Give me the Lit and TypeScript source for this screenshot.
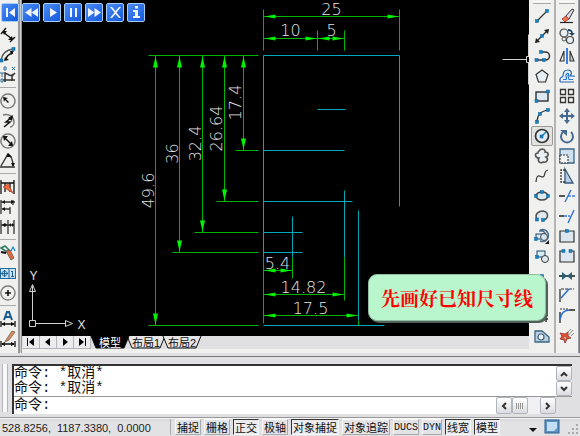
import { LitElement, html, svg, css } from "lit";
import { customElement, state } from "lit/decorators.js";
import { classMap } from "lit/directives/class-map.js";

const NAVY = "#1c4668";
const BLUE = "#1484c8";
const K = "#333";

const dots = (...pts: number[][]) =>
  pts.map(([x, y]) => svg`<rect x=${x - 1.5} y=${y - 1.5} width="3" height="3" fill=${BLUE} stroke="#0a5c94" stroke-width=".5"/>`);

const line = (d: string, color = K, w = 1.2) =>
  svg`<path d=${d} fill="none" stroke=${color} stroke-width=${w}/>`;

const shape = (d: string, fill = "#e4edf4", color = K, w = 1.2) =>
  svg`<path d=${d} fill=${fill} stroke=${color} stroke-width=${w}/>`;

const icons: Record<string, unknown> = {
  // dimension toolbar
  linear: [line("M1 7L6 1M10 15L15 10M3 5L12 12", "#111", 1.4), shape("M3 4h4L4 8zM13 13H8L12 9z", "#111", "none")],
  arcLen: [line("M1 13C2 7 6 3 13 2", "#555", 1.5), line("M6 13C6 9 9 7 13 6", "#111", 1.5), shape("M4 14l1-4 4 3zM14 4l-3 4-1-4z", "#111", "none"), dots([1.5, 13.5], [13.5, 2])],
  ordinate: [line("M5 5V15M3 13H15M5 7C9 6 9 10 12 8V14M15 6L12 9", K, 1.5), line("M0 6h4M2 6v4M1 12h2v3H1zM4 0h2v3H4zM12 0l3 3M15 0l-3 3", "#2c70a0", 1)],
  radius: [line("M8 1A7 7 0 1 1 7.9 1", "#777", 1.4), shape("M3 4l5 1-2 1 3 3-1 1-3-3-1 2z", "#111", "none")],
  jogged: [line("M3 2C9 0 14 4 14 9C14 12 12 14 10 14", "#777", 1.4), line("M12 4L6 9H10L4 14", "#111", 1.5), shape("M13 2l-1 6-4-3z", "#111", "none")],
  diameter: [line("M8 1A7 7 0 1 1 7.9 1", "#777", 1.4), line("M4 4L12 12", "#111", 1.5), shape("M3 3h5L4 8zM13 13H8L12 8z", "#111", "none")],
  angular: [line("M0 14H15M1 13L8 1C11 3 13 8 13 13", K, 1.4), shape("M6 4l2-4 4 4zM11 10h4l-2 4z", "#111", "none")],
  quick: [line("M1 1V15M14 1V15M1 4H14M5 4V13M10 4V13", "#111", 1.3), shape("M3 8l5-3 5 9-5-3z", "#ee6a3c", "#b44020", .7)],
  baseline: [line("M1 1V15M1 3H15M13 1v5M2 10H10M10 8V15", K, 1.3), shape("M2 3l3-2v4zM14 3l-3-2v4zM2 10l3-2v4z", "#111", "none")],
  cont: [line("M1 1V15M8 1V15M14 1V15M1 6H14", K, 1.3), shape("M2 6l3-2v4zM7 6l-2-2v4zM9 6l2-2v4zM14 6l-2-2v4z", "#111", "none")],
  leader: [line("M1 3l4-2 4 4-2 2z", "#2c7a5c", 1.6), line("M1 7l5 1", "#111", 2), shape("M6 6l4-1 4 8-3 2z", "#e66a38", "#555", .8), line("M11 6l2-4 2 4", BLUE, 1.2)],
  tolerance: [svg`<rect x=".5" y="3.5" width="15" height="10" fill="#c8e2f4" stroke="#276c9c"/>`, line("M9 3V14M4.500 5v7M1 8.500h7M4.500 6a2.500 2.500 0 1 0 .1 0M12.500 6v5M11 6.500h2M11 11.500h3", "#1b6296", 1)],
  center: [line("M8 1A7 7 0 1 1 7.900 1", "#777", 1.3), line("M5 8H11M8 5V11", "#111", 1.6)],
  dimText: [line("M4 9L7 1H9L12 9M5 6H11", "#175c90", 2), line("M1 10V16M15 10V16M2 13H14", "#111", 1.3), shape("M1 13l4-2v4zM15 13l-4-2v4z", "#111", "none")],
  dimEdit: [shape("M6 9L12 0l3 1L9 9l-4 2z", "#e58a68", "#664", .8), line("M1 10V16M15 10V16M2 13H14", "#111", 1.3), shape("M1 13l4-2v4zM15 13l-4-2v4z", "#111", "none")],
  // draw toolbar
  line: [line("M2 14L13 3", K), dots([3, 13], [13, 3])],
  xline: [line("M2 14L14 2", K, 1.5), shape("M1 15l1-5 4 4zM15 1l-5 1 4 4z", "#222", "none"), dots([8, 8])],
  pline: [line("M2 12H12A4 4 0 0 0 11 4H8", K, 1.5), dots([2.5, 12], [10, 12], [7, 4])],
  polygon: shape("M8 2L14 6.500 11.500 14H4.500L2 6.500Z"),
  rect: [svg`<rect x="2" y="4" width="12" height="9" fill="#dce9f2" stroke="#222" stroke-width="1.300"/>`, dots([2.5, 13], [14, 3.5])],
  arc: [line("M3 14C3 7 7 3 14 2", K), dots([3, 14], [6, 6], [14, 2])],
  circle: [svg`<circle cx="8" cy="8" r="6.500" fill="#e4edf4" stroke="#333" stroke-width="1.700"/>`, line("M8 8L12 4", BLUE, 1.5), dots([7.5, 8.5])],
  cloud: shape("M5 3C7 0 12 1 11 4C15 4 15 8 12 9C15 11 13 15 9 14C6 16 3 13 5 10C1 10 0 5 4 5C4 4 4 3 5 3Z", "#eaf0f6", "#555", 1.6),
  spline: line("M2 14C3 2 8 12 10 8S10 3 14 2"),
  ellipse: [svg`<ellipse cx="8" cy="8" rx="6" ry="4" fill="#dfe9f0" stroke="#444" stroke-width="1.400"/>`, dots([2, 8], [14, 8], [8, 4])],
  ellArc: [shape("M3 11C0 6 5 3 9 3C15 4 15 11 9 12", "#dfe9f0", "#555", 1.6), dots([3, 11.5], [9, 12])],
  insert: [svg`<rect x="2" y="6" width="8" height="5" fill="#d8ecf4" stroke=${NAVY}/>`, line("M6 2A6 6 0 1 1 6 13M5 3h4l3 3", "#4a7090", 1.5), svg`<circle cx="10" cy="9" r="3.500" fill="#d5e4ee" stroke="#445"/>`, shape("M15 12v4h-4z", "#111", "none"), dots([2, 11])],
  block: [svg`<rect x="3" y="3" width="8" height="6" fill="#d8ecf4" stroke=${NAVY}/><circle cx="11" cy="11" r="3.500" fill="#dfe9f0" stroke="#333"/>`, dots([3, 9])],
  point: dots([8, 8]),
  hatch: line("M2 3H14M2 7H14M2 11H14M4 2V14M8 2V14M12 2V14", NAVY, 1),
  gradient: line("M2 3H14M2 7H14M2 11H14M4 2V14M8 2V14M12 2V14", "#222", 1.3),
  region: [shape("M1 3H8L15 9V14H1Z", "#b9cede", "#3d6482", 1.3), svg`<circle cx="7" cy="9" r="3" fill="#eef5fa" stroke="#3d6482" stroke-width="1.200"/>`],
  // modify toolbar
  erase: [shape("M6 9L13 1l2 1-5 9z", "#dde", "#333", 1), shape("M3 11l4-3 3 3-4 3z", "#ee7450", "#933", .8), line("M1 14.500H14", "#222", 1.2)],
  copy: [svg`<circle cx="5" cy="5" r="4" fill="#e6edf3" stroke="#444" stroke-width="1.200"/><circle cx="11" cy="12" r="3.500" fill="#e6edf3" stroke="#444" stroke-width="1.200"/><circle cx="5" cy="11" r="2" fill="none" stroke="#555"/>`, line("M9 2c4 0 4 2 4 4", NAVY, 1.8), shape("M10 5h6l-3 3z", NAVY, "none")],
  mirror: [shape("M5 3V13H1Z", "#f0f0f0", K, 1.1), shape("M11 3V13H15Z", "#c8d0d8", K, 1.1), line("M8 0V16", "#3c7ce0", 2)],
  offset: [shape("M1 14V11C1 9 4 9 4 8C4 4 6 2 9 2C12 2 14 5 11 8H15V9M1 14H15", "#e8f0f8", "#2562a8", 1.2), line("M4 11.500H7C9 10 6 9 7 7C8 4 11 6 9 8L10 11.500H14", "#2c78d0", 1.2)],
  array: svg`<path d="M1.500 1.500h5v5h-5zM9.500 1.500h5v5h-5zM1.500 9.500h5v5h-5zM9.500 9.500h5v5h-5z" fill="#f6f6f6" stroke="#333" stroke-width="1.300"/>`,
  move: [line("M8 2V14M2 8H14", "#456a92", 2), shape("M8 0l3 4H5zM8 16l3-4H5zM0 8l4-3v6zM16 8l-4-3v6z", "#456a92", "none")],
  rotate: [line("M4 4A6 6 0 1 0 12 4", "#456a92", 2), shape("M1 2h7v6z", "#456a92", "none")],
  scale: [svg`<path d="M1 1H15V15H1z" fill="#cfe1ef" stroke="#3c6688" stroke-width="1.300"/><path d="M1 7H9V15H1z" fill="#f2f2f2" stroke="#333" stroke-dasharray="2 1"/>`],
  stretch: [shape("M6 1L14 15H6Z", "#b8cfe2", "#34597e", 1.3), svg`<path d="M6 2H2V14H7" fill="none" stroke="#333" stroke-width="1.300" stroke-dasharray="2 1"/>`],
  trim: [line("M0 8H6", "#222", 1.5), line("M6 14L12 2", "#2468d0", 1.3), svg`<path d="M9 8H16" stroke="#3c7ce0" stroke-width="1.300" stroke-dasharray="3 1"/>`],
  extend: [line("M0 8H5", "#222", 1.5), svg`<path d="M5 8H11" stroke="#3c7ce0" stroke-width="1.300" stroke-dasharray="3 1"/>`, line("M9 15L15 2", "#2468d0", 1.3)],
  breakPt: [shape("M1 3H15V14H1Z", "#dde7ef", "#333", 1.2), dots([8, 3])],
  breakIt: [shape("M4 3H1V14H15V3H12", "#dde7ef", "#333", 1.2), dots([4.5, 3], [11.5, 3])],
  join: [line("M0 8H16", "#222", 1.6), shape("M3 4l5 4-5 4zM13 4l-5 4 5 4z", "#2b6070", "none")],
  chamfer: [line("M1 1V14", "#222", 1.2), line("M2 10L10 1", "#2c70d0", 1.6), svg`<path d="M2 1H15" stroke="#333" stroke-dasharray="3 1"/>`],
  fillet: [line("M1 4V15M10 2H16", "#222", 1.3), line("M1 11C2 5 5 2 11 2", "#2c70d0", 1.7), svg`<path d="M1 1H9" stroke="#333" stroke-dasharray="2 1"/>`],
  explode: [shape("M1 5l5 1 3-2v4l3 2-4 1-2 4-1-3-4-1 2-3z", "#e2522c", "#933", .8), line("M9 8l5-6M12 8l3-3M9 4l3-3", "#888", 1), shape("M4 9l3 0 0 3z", "#eee", "#555", .5)],
};

@customElement("cad-icon")
class CadIcon extends LitElement {
  static properties = { name: {} };
  declare name: string;
  static styles = css`
    :host { display: block; width: 16px; height: 16px; }
    svg { display: block; overflow: visible; }
  `;
  render() {
    return html`<svg width="16" height="16" viewBox="0 0 16 16" aria-hidden="true">${icons[this.name]}</svg>`;
  }
}

@customElement("cad-toolbar")
class CadToolbar extends LitElement {
  static properties = { groups: { attribute: false }, active: {}, grip: { type: Boolean } };
  declare groups: string[][];
  declare active: string;
  declare grip: boolean;
  static styles = css`
    :host { display: flex; flex-direction: column; background: #f0f0ee; }
    .grip { height: 1px; margin: 1px 2px 2px; border-top: 1px solid #fff; border-bottom: 1px solid #aaa; flex: none; }
    .tool {
      flex: 0 1 20px; min-height: 0; display: flex; align-items: center; justify-content: center;
      padding: 0; border: 1px solid transparent; background: none; border-radius: 2px;
    }
    .on { border-color: #9a9a98; background: #e2e2e0; }
    .sep { flex: none; height: 1px; margin: 2px 0 3px; background: #aaa; }
  `;
  render() {
    return html`
      ${this.grip ? html`<div class="grip"></div>` : ""}
      ${this.groups.map((g, i) => html`
        ${i ? html`<div class="sep"></div>` : ""}
        ${g.map((n) => html`<button class=${classMap({ tool: true, on: n === this.active })} aria-label=${n}>
          <cad-icon .name=${n}></cad-icon></button>`)}
      `)}`;
  }
}

// A dimension line with an arrowhead at each end.
const dimH = (x1: number, x2: number, y: number) => svg`
  <path class="g" d="M${x1} ${y}H${x2}"/>
  <path class="head" d="M${x1 + 1} ${y}l11 -2v4zM${x2 - 1} ${y}l-11 -2v4z"/>`;
const dimV = (x: number, y1: number, y2: number) => svg`
  <path class="g" d="M${x} ${y1}V${y2}"/>
  <path class="head" d="M${x} ${y1 + 1}l-2.500 11h5zM${x} ${y2 - 1}l-2.500 -11h5z"/>`;
const label = (x: number, y: number, t: string) => svg`<text x=${x} y=${y}>${t}</text>`;
const labelV = (x: number, y: number, t: string) =>
  svg`<text transform="translate(${x} ${y}) rotate(-90)">${t}</text>`;

@customElement("cad-drawing")
class CadDrawing extends LitElement {
  static styles = css`
    :host { display: block; background: #000; overflow: hidden; }
    svg { display: block; width: 100%; height: 100%; }
    .g { stroke: #00b400; fill: none; }
    .c { stroke: #00a8b8; fill: none; }
    .w { stroke: #d0d0d0; fill: none; }
    .head { fill: #00f400; }
    text { font: 200 16px "DejaVu Sans", "DejaVu Sans Light", sans-serif; fill: #e4e4e4; text-anchor: middle; }
    .axis { font: 12px "Liberation Sans", sans-serif; }
  `;
  render() {
    return html`<svg viewBox="22 0 507 335" preserveAspectRatio="xMinYMin meet" role="img" aria-label="Drawing">
      <g transform="translate(.5 .5)">
        <path class="c" d="M263 257V55H399V206"/>
        <path class="c" d="M317 109H345M263 150H344M263 201H352M263 232H302M263 252H302"/>
        <path class="c" d="M292 216V257M344 190V257M358 210V320M263 325H384"/>
        <path class="g" d="M263 9V50M399 9V50M317 30V50M344 30V50M148 55H258M235 150H258M216 201H258M194 232H258M172 252H258M148 325H258M263 257V323M292 257V278M344 257V300M358 320V325"/>
        ${dimH(263, 399, 16)}${dimH(263, 317, 38)}${dimH(317, 344, 38)}
        ${dimH(263, 292, 270)}${dimH(263, 344, 294)}${dimH(263, 358, 315)}
        ${dimV(155, 55, 325)}${dimV(179, 55, 252)}${dimV(202, 55, 232)}${dimV(224, 55, 201)}${dimV(243, 55, 150)}
        ${label(331, 14, "25")}${label(290, 35, "10")}${label(331, 35, "5")}
        ${label(277, 268, "5.4")}${label(303, 292, "14.82")}${label(310, 313, "17.5")}
        ${labelV(153, 190, "49.6")}${labelV(177, 153, "36")}${labelV(200, 143, "32.4")}
        ${labelV(221, 128, "26.64")}${labelV(240, 102, "17.4")}
        <path class="w" d="M29 320H35V326H29ZM32 320V285M35 323H65M29 291L32 284L35 291ZM65 320L72 323L65 326ZM502 59H526M526 56H531V62H526ZM528 34V56M528 62V84"/>
        <text class="axis" x="33" y="279">Y</text>
        <text class="axis" x="81" y="328">X</text>
      </g>
    </svg>`;
  }
}

const media: [string, string][] = [
  ["First", "M4 4h2v9H4zM13 4v9L7 8.500z"],
  ["Rewind", "M8.500 4v9L2 8.500zM15 4v9L8.500 8.500z"],
  ["Play", "M6 4l7 4.500L6 13z"],
  ["Pause", "M5 4h2v9H5zM10 4h2v9h-2z"],
  ["Forward", "M2 4l6.500 4.500L2 13zM8.500 4L15 8.500 8.500 13z"],
  ["Close", "M3 3h2l3.500 4L12 3h2L9.500 8.500 14 14h-2L8.500 10 5 14H3l4.500-5.500z"],
  ["Info", "M7 2h3v2.500H7zM5 6h5v6h2v2H5v-2h2V8H5z"],
];
const nav = [
  ["First tab", "M2 2h1v8H2zM9 2v8L4 6z"],
  ["Previous tab", "M8 2v8L3 6z"],
  ["Next tab", "M4 2v8l5-4z"],
  ["Last tab", "M3 2v8l5-4zM9 2h1v8H9z"],
];
const modes: [string, boolean][] = [
  ["捕捉", false], ["栅格", false], ["正交", true], ["极轴", false], ["对象捕捉", true],
  ["对象追踪", false], ["DUCS", false], ["DYN", false], ["线宽", true], ["模型", true],
];

@customElement("app-root")
class AppRoot extends LitElement {
  @state() private tab = "模型";
  static styles = css`
    :host {
      display: flex; flex-direction: column; height: 100vh; overflow: hidden; position: relative;
      background: #e0e0e2; color: #111; font-family: "Liberation Sans", "Noto Sans CJK SC", sans-serif;
    }
    button { font-family: inherit; color: inherit; }
    .workspace { flex: 1; min-height: 0; display: flex; background: #f0f0ee; }
    .dims { width: 16px; padding: 25px 2px 0 0; flex: none; }
    .rail { width: 4px; flex: none; box-sizing: border-box; border: solid #999; border-width: 0 1px 0 2px; background: #ccc; }
    .center { flex: 1; min-width: 0; display: flex; flex-direction: column; }
    .drawing { flex: 1; min-height: 0; }
    .draw { width: 22px; padding: 0 1px; margin-left: 1px; flex: none; }
    .modify { width: 20px; padding: 0 1px; flex: none; }
    .split { width: 2px; flex: none; background: #b4b4b4; }
    .edge { width: 2px; flex: none; background: linear-gradient(90deg, #aaa, #667); }

    .player { position: absolute; left: 1px; top: 3px; display: flex; gap: 3px; }
    .media {
      width: 18px; height: 19px; padding: 0; border: 1px solid #a4cdf6; border-radius: 2px;
      background: linear-gradient(135deg, #4b8cf4, #1458dc); display: flex; align-items: center; justify-content: center;
    }
    .media svg { fill: #f0f4fc; flex: none; }

    .tabs { display: flex; height: 13px; background: #e0e0e2; flex: none; margin-bottom: 4px; padding-left: 1px; }
    .nav { width: 17px; padding: 0; border: solid #b4b4b8; border-width: 0 1px 1px 0; background: #ececee; display: flex; justify-content: center; }
    .tab {
      position: relative; width: 38px; padding: 0; border: 0; background: none; font-size: 11px; line-height: 12px;
      white-space: nowrap; text-align: center; margin-right: -2px;
    }
    .tab svg { position: absolute; inset: 0; width: 100%; height: 100%; fill: #e6e6e8; stroke: #111; overflow: visible; }
    .tab span { position: relative; }
    .current { color: #fff; z-index: 1; }
    .current svg { fill: #000; }

    .command {
      flex: none; display: flex; border-top: 1px solid #777; margin-top: 3px; padding: 7px 8px 3px 2px; gap: 2px;
      background: #e0e0e2;
    }
    .handle { width: 4px; border: solid #b6b6b8; border-width: 0 1px; background: #f8f8f8; margin: 0 2px 2px 0; }
    .console { flex: 1; min-width: 0; border: solid #333; border-width: 2px 0 0 2px; background: #fff;
      font: 14px/15px "Liberation Mono", "Noto Sans CJK SC", monospace; }
    .log { display: flex; height: 30px; border-bottom: 1px solid #999; }
    .lines { flex: 1; }
    .line { height: 15px; }
    .entry { display: flex; height: 17px; align-items: center; }
    .entry label { flex: none; }
    .prompt { flex: 1; min-width: 0; border: 0; outline: 0; padding: 0; font: inherit; height: 15px; background: none; }
    .vscroll { display: flex; flex-direction: column; flex: none; }
    .hscroll { display: flex; flex: none; background: #f0f0f2; height: 17px; }
    .corner { width: 16px; height: 18px; background: #e0e0e2; flex: none; }
    .step {
      width: 16px; flex: 1; min-height: 0; box-sizing: border-box; padding: 0; border: 1px solid #b0b4bc; border-radius: 2px;
      background: linear-gradient(#fff, #dcdce0); display: flex; align-items: center; justify-content: center;
    }
    .hscroll .step { flex: none; }
    .gap { width: 12px; }

    .status {
      flex: none; display: flex; align-items: center; height: 18px; border-top: 1px solid #999; gap: 3px;
      background: linear-gradient(#d2d2d6, #e2e2e5 4px); font-size: 11px; box-shadow: inset 0 1px #f6f6f6;
    }
    .coords {
      display: flex; gap: 6px; box-sizing: border-box; width: 171px; height: 16px; line-height: 18px; padding-left: 2px;
      border-right: 1px solid #aaa; margin-right: 1px; flex: none; color: #222;
    }
    .mode {
      height: 16px; padding: 0 1px; border: 1px solid; border-color: #f8f8f8 #aaa #aaa #f8f8f8;
      background: #e4e4e7; font: 11px/14px "Noto Sans CJK SC", sans-serif; white-space: nowrap; flex: none;
    }
    .latin { font: 10px/16px "Liberation Mono", monospace; padding: 0; }
    .down { border-color: #333 #f8f8f8 #f8f8f8 #333; background: #ececee; }
    .tray { margin-left: auto; display: flex; align-items: center; gap: 7px; height: 16px; padding-right: 1px; }
    .plain { border: 0; background: none; padding: 0; display: flex; }

    .callout {
      position: absolute; left: 368px; top: 274px; padding: 0 12px; line-height: 45px; border-radius: 9px;
      background: #b9f6cd; border: 1px solid #92bca0; box-shadow: 2px 2px 0 #50605a; box-sizing: border-box; margin: 0;
      color: #f00; font-size: 19px; font-weight: 700; font-family: "Noto Serif CJK SC", "Noto Sans CJK SC", serif; white-space: nowrap;
    }
  `;

  private step(name: string, d: string) {
    return html`<button class="step" aria-label=${name}>
      <svg width="8" height="8" viewBox="0 0 8 8" fill="none" stroke="#333" stroke-width="2"><path d=${d}/></svg>
    </button>`;
  }

  render() {
    return html`
      <main class="workspace">
        <cad-toolbar class="dims" .groups=${[
          ["linear", "arcLen", "ordinate"],
          ["radius", "jogged", "diameter", "angular"],
          ["quick", "baseline", "cont"],
          ["leader", "tolerance", "center"],
          ["dimText", "dimEdit"],
        ]}></cad-toolbar>
        <div class="rail"></div>
        <section class="center">
          <cad-drawing class="drawing"></cad-drawing>
          <nav class="tabs">
            ${nav.map(([n, d]) => html`<button class="nav" aria-label=${n}><svg width="12" height="12" viewBox="0 0 12 12"><path d=${d}/></svg></button>`)}
            ${["模型", "布局1", "布局2"].map((t) => html`
              <button class=${classMap({ tab: true, current: t === this.tab })} @click=${() => (this.tab = t)}>
                <svg viewBox="0 0 38 13" preserveAspectRatio="none"><path d="M0 0L5 12H33L38 0"/></svg><span>${t}</span>
              </button>`)}
          </nav>
        </section>
        <cad-toolbar class="draw" grip active="circle" .groups=${[[
          "line", "xline", "pline", "polygon", "rect", "arc", "circle", "cloud", "spline", "ellipse", "ellArc",
          "insert", "block", "point", "hatch", "gradient", "region"]]}></cad-toolbar>
        <div class="split"></div>
        <cad-toolbar class="modify" grip .groups=${[[
          "erase", "copy", "mirror", "offset", "array", "move", "rotate", "scale", "stretch", "trim", "extend",
          "breakPt", "breakIt", "join", "chamfer", "fillet", "explode"]]}></cad-toolbar>
        <div class="edge"></div>
      </main>

      <section class="command">
        <div class="handle"></div>
        <div class="console">
          <div class="log">
            <div class="lines"><div class="line">命令: *取消*</div><div class="line">命令: *取消*</div></div>
            <div class="vscroll">${this.step("Up", "M1 6L4 3L7 6")}${this.step("Down", "M1 2L4 5L7 2")}</div>
          </div>
          <div class="entry">
            <label for="cmd">命令:</label><input id="cmd" class="prompt" />
            <div class="hscroll">
              ${this.step("Left", "M6 1L3 4L6 7")}
              <button class="step" aria-label="Thumb"><svg width="8" height="8" viewBox="0 0 8 8" stroke="#999"><path d="M.5 1V7M2.500 1V7M4.500 1V7M6.500 1V7"/></svg></button>
              <div class="gap"></div>
              ${this.step("Right", "M2 1L5 4L2 7")}
            </div>
            <div class="corner"></div>
          </div>
        </div>
      </section>

      <footer class="status">
        <div class="coords"><span>528.8256,</span><span>1187.3380,</span><span>0.0000</span></div>
        ${modes.map(([t, on]) => html`<button class=${classMap({ mode: true, down: on, latin: /^[A-Z]/.test(t) })}>${t}</button>`)}
        <div class="tray">
          <button class="plain" aria-label="Menu"><svg width="8" height="14"><path d="M0 8H8L4 12Z" fill="#111"/></svg></button>
          <button class="plain" aria-label="Clean screen"><svg width="16" height="16"><rect x="1" y="1" width="14" height="13" fill="#5c94c4" stroke="#2c6090"/><path d="M3 3H13V9L10 12H3Z" fill="#c4def2"/></svg></button>
          <svg width="12" height="16" fill="#aaa"><path d="M9 5h2v2H9zM5 9h2v2H5zM9 9h2v2H9zM1 13h2v2H1zM5 13h2v2H5zM9 13h2v2H9z"/></svg>
        </div>
      </footer>

      <div class="player">
        ${media.map(([n, d]) => html`<button class="media" aria-label=${n}><svg width="17" height="17" viewBox="0 0 17 17"><path d=${d}/></svg></button>`)}
      </div>
      <p class="callout">先画好已知尺寸线</p>
    `;
  }
}
